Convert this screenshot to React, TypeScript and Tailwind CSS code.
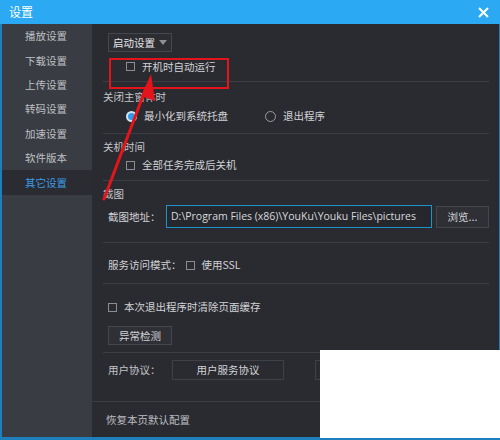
import { useState } from "react";

const menu = ["播放设置", "下载设置", "上传设置", "转码设置", "加速设置", "软件版本", "其它设置"];

function Check({ label }: { label: string }) {
    return (
        <div className="flex items-center gap-[7px]">
            <span className="w-[9px] h-[9px] border border-[#8b8d92]" />
            <span>{label}</span>
        </div>
    );
}

function Radio({ label, on }: { label: string; on?: boolean }) {
    return (
        <div className="flex items-center gap-[7px]">
            {on ? (
                <span className="w-[11px] h-[11px] rounded-full bg-[#2e9bea] border-2 border-[#cfe6f8]" />
            ) : (
                <span className="w-[11px] h-[11px] rounded-full border border-[#9a9ca1]" />
            )}
            <span>{label}</span>
        </div>
    );
}

const Sep = ({ cls = "" }: { cls?: string }) => <div className={"h-px bg-[#3c3e45] " + cls} />;

export default function App() {
    const [active] = useState(6);

    return (
        <div
            className="relative w-[500px] h-[440px] bg-[#2a2b31] flex flex-col text-[10.5px] text-[#d2d3d6] overflow-hidden"
            style={{ fontFamily: '"Noto Sans CJK SC", "Noto Sans", sans-serif' }}
        >
            {/* 标题栏 */}
            <div className="h-[24px] shrink-0 bg-[#2ba9f3] flex items-center justify-between pl-[9px] pr-[11px] text-white text-[12px]">
                <span>设置</span>
                <svg width="11" height="11" viewBox="0 0 11 11">
                    <path d="M1 1 L10 10 M10 1 L1 10" stroke="#fff" strokeWidth="2" />
                </svg>
            </div>

            <div className="flex flex-1 border-l-2 border-r border-b-[3px] border-[#1d7fbb]">
                {/* 左侧菜单 */}
                <div className="w-[90px] shrink-0 bg-[#3a3c43] flex flex-col">
                    {menu.map((m, i) => (
                        <div
                            key={m}
                            className={
                                "h-[24.4px] flex items-center pl-[23px] " +
                                (i === active ? "bg-[#2b2c32] text-[#3a9ce6]" : "text-[#bfc0c4]")
                            }
                        >
                            {m}
                        </div>
                    ))}
                </div>

                {/* 内容 */}
                <div className="flex-1 flex flex-col pl-[11px] pr-[11px]">
                    <div className="pt-[9px] pl-[5px]">
                        <div className="h-[19px] w-[64px] border border-[#45474e] bg-[#2d2e34] flex items-center pl-[4px] gap-[4px] text-[#e6e6e8]">
                            <span>启动设置</span>
                            <svg width="8" height="5" viewBox="0 0 8 5">
                                <path d="M0 0 L8 0 L4 5 Z" fill="#8d8f94" />
                            </svg>
                        </div>
                    </div>
                    <div className="h-[29px] flex items-center pl-[23px]">
                        <Check label="开机时自动运行" />
                    </div>
                    <Sep />

                    <div className="h-[18px] mt-[6px] flex items-center text-[#c4c5c9]">关闭主窗体时</div>
                    <div className="h-[20px] flex items-center pl-[23px] gap-[37px]">
                        <Radio label="最小化到系统托盘" on />
                        <Radio label="退出程序" />
                    </div>
                    <Sep cls="mt-[7px]" />

                    <div className="h-[18px] mt-[4px] flex items-center text-[#c4c5c9]">关机时间</div>
                    <div className="h-[18px] flex items-center pl-[23px]">
                        <Check label="全部任务完成后关机" />
                    </div>
                    <Sep cls="mt-[6px]" />

                    <div className="h-[18px] mt-[4px] flex items-center text-[#c4c5c9]">截图</div>
                    <div className="h-[23px] mt-[2px] flex items-center pl-[5px]">
                        <span className="w-[58px]">截图地址：</span>
                        <div
                            className="w-[266px] h-[23px] border border-[#1e93c9] bg-[#26272d] flex items-center pl-[4px] text-[10.5px] text-[#d8d9dc] whitespace-nowrap overflow-hidden"
                            style={{ fontFamily: '"Open Sans", "Noto Sans", sans-serif' }}
                        >
                            D:\Program Files (x86)\YouKu\Youku Files\pictures
                        </div>
                        <div className="ml-[4px] w-[53px] h-[22px] border border-[#44464d] bg-[#2f3036] flex items-center justify-center">
                            浏览...
                        </div>
                    </div>
                    <Sep cls="mt-[14px]" />

                    <div className="h-[20px] mt-[12px] flex items-center pl-[5px] gap-[4px]">
                        <span>服务访问模式：</span>
                        <Check label="使用SSL" />
                    </div>
                    <Sep cls="mt-[8px]" />

                    <div className="h-[18px] mt-[14px] flex items-center pl-[5px]">
                        <Check label="本次退出程序时清除页面缓存" />
                    </div>
                    <div className="mt-[10px] pl-[5px]">
                        <div className="w-[64px] h-[19px] border border-[#44464d] bg-[#2f3036] flex items-center justify-center">
                            异常检测
                        </div>
                    </div>
                    <Sep cls="mt-[7px]" />

                    <div className="h-[20px] mt-[7px] flex items-center pl-[5px]">
                        <span className="w-[64px] text-[#c4c5c9]">用户协议：</span>
                        <div className="w-[112px] h-[20px] border border-[#3f4148] flex items-center justify-center">
                            用户服务协议
                        </div>
                        <div className="ml-[31px] w-[112px] h-[20px] border border-[#3f4148]" />
                    </div>
                    <Sep cls="mt-[21px] -ml-[11px]" />

                    <div className="flex-1 flex items-center pl-[3px] text-[#bdbec2]">恢复本页默认配置</div>
                </div>
            </div>

            {/* 标注 */}
            <div className="absolute left-[109px] top-[58px] w-[120px] h-[31px] border-2 border-[#e3141a]" />
            <svg className="absolute left-0 top-0" width="500" height="440" viewBox="0 0 500 440">
                <path d="M104 199 L146 88" stroke="#e3141a" strokeWidth="3" strokeLinecap="round" />
                <path d="M151 74 L155 101 L141 96 Z" fill="#e3141a" />
            </svg>
            <div className="absolute left-[320px] top-[350px] w-[180px] h-[88px] bg-white" />
        </div>
    );
}
